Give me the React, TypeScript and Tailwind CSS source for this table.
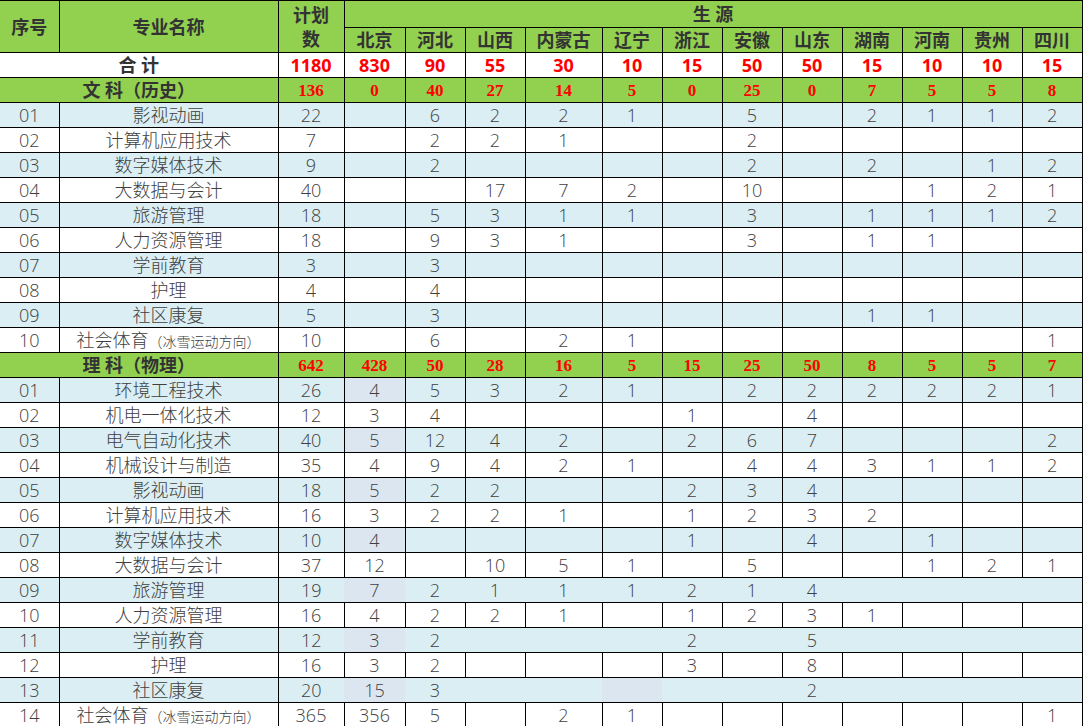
import React from "react";

const provinces = ["北京", "河北", "山西", "内蒙古", "辽宁", "浙江", "安徽", "山东", "湖南", "河南", "贵州", "四川"];
const widths = [59, 219, 66, 61, 60, 60, 77, 60, 60, 60, 60, 60, 60, 60, 60];

type Row = { no: string; name: string; note?: boolean; plan: number; vals: (number | null)[] };
const _ = null;

const wenke: Row[] = [
  { no: "01", name: "影视动画", plan: 22, vals: [_, 6, 2, 2, 1, _, 5, _, 2, 1, 1, 2] },
  { no: "02", name: "计算机应用技术", plan: 7, vals: [_, 2, 2, 1, _, _, 2, _, _, _, _, _] },
  { no: "03", name: "数字媒体技术", plan: 9, vals: [_, 2, _, _, _, _, 2, _, 2, _, 1, 2] },
  { no: "04", name: "大数据与会计", plan: 40, vals: [_, _, 17, 7, 2, _, 10, _, _, 1, 2, 1] },
  { no: "05", name: "旅游管理", plan: 18, vals: [_, 5, 3, 1, 1, _, 3, _, 1, 1, 1, 2] },
  { no: "06", name: "人力资源管理", plan: 18, vals: [_, 9, 3, 1, _, _, 3, _, 1, 1, _, _] },
  { no: "07", name: "学前教育", plan: 3, vals: [_, 3, _, _, _, _, _, _, _, _, _, _] },
  { no: "08", name: "护理", plan: 4, vals: [_, 4, _, _, _, _, _, _, _, _, _, _] },
  { no: "09", name: "社区康复", plan: 5, vals: [_, 3, _, _, _, _, _, _, 1, 1, _, _] },
  { no: "10", name: "社会体育", note: true, plan: 10, vals: [_, 6, _, 2, 1, _, _, _, _, _, _, 1] },
];

const like: Row[] = [
  { no: "01", name: "环境工程技术", plan: 26, vals: [4, 5, 3, 2, 1, _, 2, 2, 2, 2, 2, 1] },
  { no: "02", name: "机电一体化技术", plan: 12, vals: [3, 4, _, _, _, 1, _, 4, _, _, _, _] },
  { no: "03", name: "电气自动化技术", plan: 40, vals: [5, 12, 4, 2, _, 2, 6, 7, _, _, _, 2] },
  { no: "04", name: "机械设计与制造", plan: 35, vals: [4, 9, 4, 2, 1, _, 4, 4, 3, 1, 1, 2] },
  { no: "05", name: "影视动画", plan: 18, vals: [5, 2, 2, _, _, 2, 3, 4, _, _, _, _] },
  { no: "06", name: "计算机应用技术", plan: 16, vals: [3, 2, 2, 1, _, 1, 2, 3, 2, _, _, _] },
  { no: "07", name: "数字媒体技术", plan: 10, vals: [4, _, _, _, _, 1, _, 4, _, 1, _, _] },
  { no: "08", name: "大数据与会计", plan: 37, vals: [12, _, 10, 5, 1, _, 5, _, _, 1, 2, 1] },
  { no: "09", name: "旅游管理", plan: 19, vals: [7, 2, 1, 1, 1, 2, 1, 4, _, _, _, _] },
  { no: "10", name: "人力资源管理", plan: 16, vals: [4, 2, 2, 1, _, 1, 2, 3, 1, _, _, _] },
  { no: "11", name: "学前教育", plan: 12, vals: [3, 2, _, _, _, 2, _, 5, _, _, _, _] },
  { no: "12", name: "护理", plan: 16, vals: [3, 2, _, _, _, 3, _, 8, _, _, _, _] },
  { no: "13", name: "社区康复", plan: 20, vals: [15, 3, _, _, _, _, _, 2, _, _, _, _] },
  { no: "14", name: "社会体育", note: true, plan: 365, vals: [356, 5, _, 2, 1, _, _, _, _, _, _, 1] },
];

const totals = [830, 90, 55, 30, 10, 15, 50, 50, 15, 10, 10, 15];
const wenTotals = [0, 40, 27, 14, 5, 0, 25, 0, 7, 5, 5, 8];
const liTotals = [428, 50, 28, 16, 5, 15, 25, 50, 8, 5, 5, 7];

const sans = "font-['Open_Sans','Noto_Sans_CJK_SC',sans-serif]";

function DataRow({ row, idx, li }: { row: Row; idx: number; li: boolean }) {
  const blue = idx % 2 === 0;
  const noLines = li && (idx === 8 || idx === 10 || idx === 12);
  const cells: React.ReactNode[] = [row.no, null, row.plan, ...row.vals];
  return (
    <tr className="h-[25px]">
      {cells.map((c, i) => {
        let bg = blue ? "bg-[#daeef3]" : "bg-white";
        if (li && blue && i === 3) bg = "bg-[#dce6f1]";
        if (li && idx === 12 && i === 7) bg = "bg-[#dce6f1]";
        const bl = i === 0 || (noLines && i >= 3) ? "border-l-0" : "";
        const br = noLines && i >= 2 && i <= 13 ? "border-r-0" : "";
        return (
          <td
            key={i}
            className={`border border-black p-0 text-center align-middle leading-none text-[18px] font-light text-[#404040] ${bg} ${bl} ${br}`}
          >
            {i === 1 ? (
              <span className="whitespace-nowrap">
                {row.name}
                {row.note && <span className="text-[14px]">（冰雪运动方向）</span>}
              </span>
            ) : (
              c
            )}
          </td>
        );
      })}
    </tr>
  );
}

function SectionRow({ label, total, vals }: { label: string; total: number; vals: number[] }) {
  return (
    <tr className="h-[25px] bg-[#92d050]">
      <td colSpan={2} className="border border-black border-l-0 p-0 text-center align-middle leading-none text-[18px] font-bold text-[#333]">
        {label}
      </td>
      {[total, ...vals].map((v, i) => (
        <td
          key={i}
          className="border border-black p-0 text-center align-middle leading-none text-[17px] font-bold text-[#ff0000] font-['Liberation_Serif',serif]"
        >
          {v}
        </td>
      ))}
    </tr>
  );
}

export default function App() {
  return (
    <div className={`w-[1084px] h-[726px] overflow-hidden bg-white ${sans}`}>
      <table className="table-fixed border-collapse w-[1082px]">
        <colgroup>
          {widths.map((w, i) => (
            <col key={i} style={{ width: w }} />
          ))}
        </colgroup>
        <tbody>
          <tr className="h-[27px] bg-[#92d050]">
            <td rowSpan={2} className="border border-black border-l-0 p-0 text-center align-middle text-[18px] font-bold text-[#333] leading-none">
              序号
            </td>
            <td rowSpan={2} className="border border-black p-0 text-center align-middle text-[18px] font-bold text-[#333] leading-none">
              专业名称
            </td>
            <td rowSpan={2} className="border border-black p-0 pt-px text-center align-middle text-[18px] font-bold text-[#333] leading-[25px]">
              <div>计划</div>
              <div className="-mt-px">数</div>
            </td>
            <td colSpan={12} className="border border-black p-0 text-center align-middle text-[18px] font-bold text-[#333] leading-none">
              生 源
            </td>
          </tr>
          <tr className="h-[25px] bg-[#92d050]">
            {provinces.map((p) => (
              <td key={p} className="border border-black p-0 text-center align-middle text-[18px] font-bold text-[#333] leading-none whitespace-nowrap">
                {p}
              </td>
            ))}
          </tr>
          <tr className="h-[25px] bg-white">
            <td colSpan={2} className="border border-black border-l-0 p-0 text-center align-middle leading-none text-[18px] font-bold text-[#333]">
              合 计
            </td>
            {[1180, ...totals].map((v, i) => (
              <td key={i} className="border border-black p-0 text-center align-middle leading-none text-[18px] font-bold text-[#ff0000]">
                {v}
              </td>
            ))}
          </tr>
          <SectionRow label="文 科（历史）" total={136} vals={wenTotals} />
          {wenke.map((r, i) => (
            <DataRow key={"w" + i} row={r} idx={i} li={false} />
          ))}
          <SectionRow label="理 科（物理）" total={642} vals={liTotals} />
          {like.map((r, i) => (
            <DataRow key={"l" + i} row={r} idx={i} li={true} />
          ))}
        </tbody>
      </table>
    </div>
  );
}
